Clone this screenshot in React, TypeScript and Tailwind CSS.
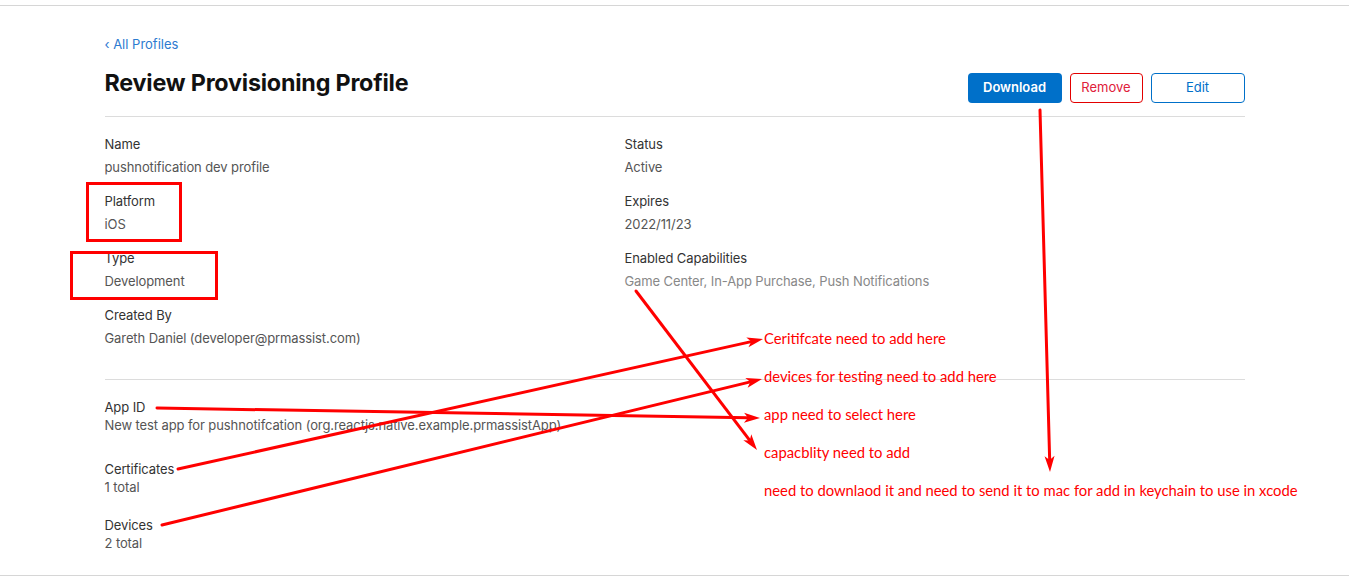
import React from 'react';

type Field = { label: string; value: string; muted?: boolean };

const leftFields: Field[] = [
  { label: 'Name', value: 'pushnotification dev profile' },
  { label: 'Platform', value: 'iOS' },
  { label: 'Type', value: 'Development' },
  { label: 'Created By', value: 'Gareth Daniel (developer@prmassist.com)' },
];

const rightFields: Field[] = [
  { label: 'Status', value: 'Active' },
  { label: 'Expires', value: '2022/11/23' },
  { label: 'Enabled Capabilities', value: 'Game Center, In-App Purchase, Push Notifications', muted: true },
];

/** Notes written over the screenshot in red */
const notes = [
  { top: 328, text: 'Ceritifcate need to add here' },
  { top: 366, text: 'devices for testing need to add here' },
  { top: 404, text: 'app need to select here' },
  { top: 442, text: 'capacblity need to add' },
  { top: 480, text: 'need to downlaod it and need to send it to mac for add in keychain to use in xcode' },
];

/** [x1, y1, tipX, tipY] for each red arrow */
const arrows: [number, number, number, number][] = [
  [157, 408, 760, 418],
  [178, 469, 763, 339],
  [162, 525, 762, 379],
  [636, 291, 757, 450],
  [1040, 110, 1050, 472],
];

function Arrow({ a }: { a: [number, number, number, number] }) {
  const [x1, y1, x2, y2] = a;
  const dx = x2 - x1;
  const dy = y2 - y1;
  const len = Math.hypot(dx, dy);
  const ux = dx / len;
  const uy = dy / len;
  const head = 16;
  const half = 5;
  const bx = x2 - ux * head;
  const by = y2 - uy * head;
  const pts = `${x2},${y2} ${bx - uy * half},${by + ux * half} ${bx + ux * 4},${by + uy * 4} ${bx + uy * half},${by - ux * half}`;
  return (
    <g>
      <line x1={x1} y1={y1} x2={bx + ux * 4} y2={by + uy * 4} stroke="#ff0000" strokeWidth="3" strokeLinecap="round" />
      <polygon points={pts} fill="#ff0000" />
    </g>
  );
}

function FieldBlock({ f, tight }: { f: Field; tight?: boolean }) {
  return (
    <div className="flex flex-col">
      <span className="text-[13px] leading-[18px] tracking-[-0.1px] text-[#333333]">{f.label}</span>
      <span
        className={`text-[13px] leading-[18px] tracking-[-0.1px] ${tight ? 'mt-0' : 'mt-[5px]'} ${
          f.muted ? 'text-[#888888]' : 'text-[#555555]'
        }`}
      >
        {f.value}
      </span>
    </div>
  );
}

export default function App() {
  return (
    <div className="relative h-[580px] w-full overflow-hidden bg-white font-['Inter',sans-serif]">
      <div className="mt-[5px] border-t border-[#d6d6d6]">
        <div className="mx-auto w-[1140px] pt-[25px]">
          {/* Back link */}
          <a className="text-[13px] leading-[18px] text-[#2d7bd0]">‹ All Profiles</a>

          {/* Header */}
          <div className="mt-[9px] flex items-start justify-between border-b border-[#dcdcdc] pb-[13px]">
            <h1 className="mt-[5px] text-[23.3px] font-bold leading-[28px] tracking-[-0.2px] text-[#111111]">
              Review Provisioning Profile
            </h1>
            <div className="mt-[9px] flex gap-2">
              <button className="h-[30px] w-[94px] rounded-[4px] bg-[#0070c9] text-[13px] font-semibold text-white">
                Download
              </button>
              <button className="h-[30px] w-[73px] rounded-[4px] border border-[#e30000] text-[13px] text-[#e0203a]">
                Remove
              </button>
              <button className="h-[30px] w-[94px] rounded-[4px] border border-[#0070c9] text-[13px] text-[#0070c9]">
                Edit
              </button>
            </div>
          </div>

          {/* Details */}
          <div className="grid grid-cols-[520px_1fr] border-b border-[#dcdcdc] pt-[18px] pb-[32px]">
            <div className="flex flex-col gap-[16px]">
              {leftFields.map((f) => (
                <FieldBlock key={f.label} f={f} />
              ))}
            </div>
            <div className="flex flex-col gap-[16px]">
              {rightFields.map((f) => (
                <FieldBlock key={f.label} f={f} />
              ))}
            </div>
          </div>

          {/* Linked items */}
          <div className="flex flex-col pt-[18px]">
            <FieldBlock
              f={{ label: 'App ID', value: 'New test app for pushnotifcation (org.reactjs.native.example.prmassistApp)' }}
              tight
            />
            <div className="mt-[26px]">
              <FieldBlock f={{ label: 'Certificates', value: '1 total' }} tight />
            </div>
            <div className="mt-[20px]">
              <FieldBlock f={{ label: 'Devices', value: '2 total' }} tight />
            </div>
          </div>
        </div>
      </div>

      <div className="absolute bottom-[4px] left-0 w-full border-t border-[#d6d6d6]" />

      {/* Annotation boxes */}
      <div className="absolute left-[86px] top-[182px] h-[60px] w-[96px] border-[3px] border-[#ff0000]" />
      <div className="absolute left-[70px] top-[251px] h-[49px] w-[148px] border-[3px] border-[#ff0000]" />

      {/* Annotation arrows */}
      <svg className="pointer-events-none absolute left-0 top-0" width="1349" height="580">
        {arrows.map((a, i) => (
          <Arrow key={i} a={a} />
        ))}
      </svg>

      {/* Annotation notes */}
      {notes.map((n) => (
        <span
          key={n.top}
          className="absolute left-[764px] whitespace-nowrap font-['Lato',sans-serif] text-[14.8px] leading-[20px] text-[#ff0000]"
          style={{ top: n.top }}
        >
          {n.text}
        </span>
      ))}
    </div>
  );
}
